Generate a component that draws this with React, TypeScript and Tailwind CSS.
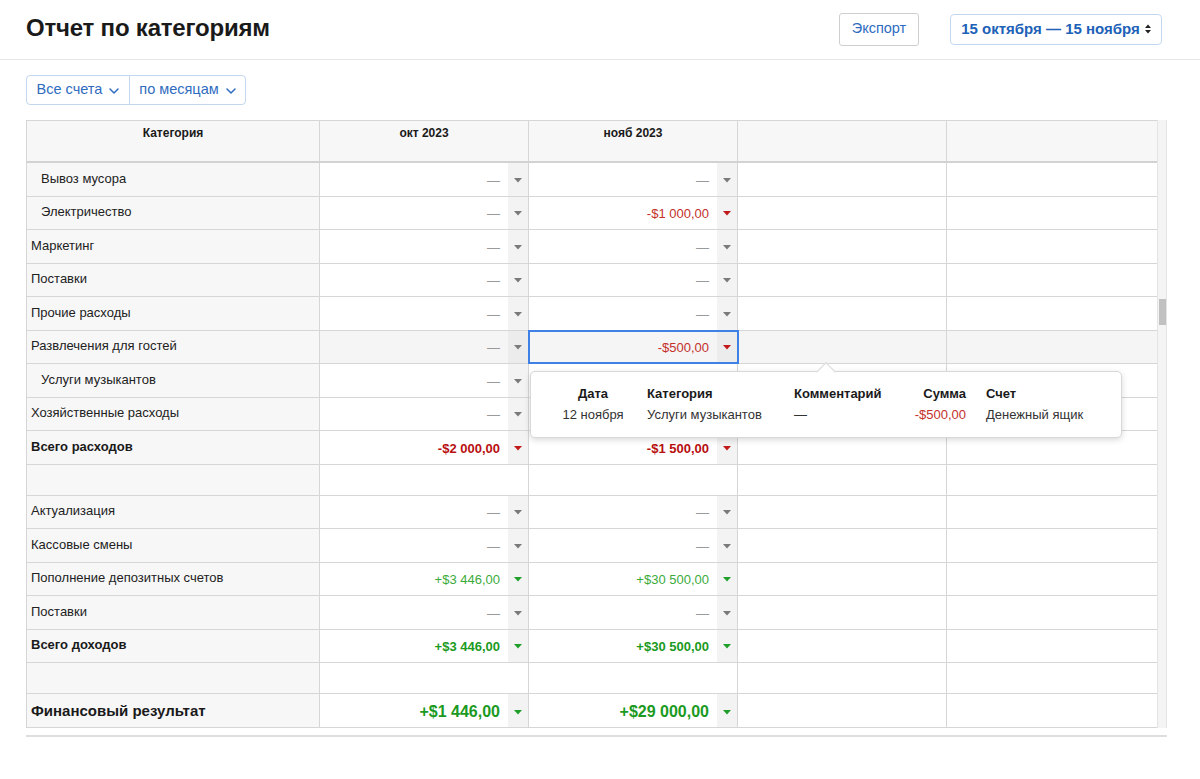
import React from "react";

type Kind = "dash" | "red" | "green";
type Val = { t: string; k: Kind };
type Row = {
  label?: string;
  indent?: boolean;
  bold?: boolean;
  big?: boolean;
  blank?: boolean;
  hover?: boolean;
  selected?: boolean;
  v?: [Val | undefined, Val | undefined];
};

const D: Val = { t: "—", k: "dash" };
const red = (t: string): Val => ({ t, k: "red" });
const green = (t: string): Val => ({ t, k: "green" });

const rows: Row[] = [
  { label: "Вывоз мусора", indent: true, v: [D, D] },
  { label: "Электричество", indent: true, v: [D, red("-$1 000,00")] },
  { label: "Маркетинг", v: [D, D] },
  { label: "Поставки", v: [D, D] },
  { label: "Прочие расходы", v: [D, D] },
  { label: "Развлечения для гостей", v: [D, red("-$500,00")], hover: true, selected: true },
  { label: "Услуги музыкантов", indent: true, v: [D, undefined] },
  { label: "Хозяйственные расходы", v: [D, undefined] },
  { label: "Всего расходов", bold: true, v: [red("-$2 000,00"), red("-$1 500,00")] },
  { blank: true },
  { label: "Актуализация", v: [D, D] },
  { label: "Кассовые смены", v: [D, D] },
  { label: "Пополнение депозитных счетов", v: [green("+$3 446,00"), green("+$30 500,00")] },
  { label: "Поставки", v: [D, D] },
  { label: "Всего доходов", bold: true, v: [green("+$3 446,00"), green("+$30 500,00")] },
  { blank: true },
  { label: "Финансовый результат", big: true, v: [green("+$1 446,00"), green("+$29 000,00")] },
];

function Tri({ k }: { k: Kind }) {
  const fill = k === "red" ? "#c21a1a" : k === "green" ? "#1f9e2a" : "#7a7a7a";
  return (
    <svg width="8" height="5" viewBox="0 0 8 5">
      <path d="M0 0 L8 0 L4 4.5 Z" fill={fill} />
    </svg>
  );
}

function ValueCell({ v, row, selected }: { v?: Val; row: Row; selected?: boolean }) {
  const bg = row.hover ? "bg-[#f5f5f5]" : "bg-white";
  if (!v) {
    return <div className={`w-[209px] h-full border-r border-[#d6d6d6] ${bg}`} />;
  }
  let color = "text-[#9a9a9a]";
  if (v.k === "red") color = row.bold ? "text-[#b80f0f] font-bold" : "text-[#c4302b]";
  if (v.k === "green") color = row.bold || row.big ? "text-[#1b9a22] font-bold" : "text-[#3cab3c]";
  const size = row.big ? "text-[16px]" : "text-[13px]";
  return (
    <div
      className={`relative w-[209px] h-full border-r border-[#d6d6d6] flex ${bg} ${
        selected ? "outline-2 outline-[#3f80e6] -outline-offset-1 z-10" : ""
      }`}
    >
      <div className={`flex-1 flex items-center justify-end pr-[8px] ${row.big ? "pt-[4px]" : "pt-[2px]"} ${size} ${color}`}>
        {v.t}
      </div>
      <div className={`w-[20px] h-full flex items-center justify-center ${row.hover ? "bg-[#ececec]" : "bg-[#f3f3f3]"} ${row.big ? "pt-[4px]" : "pt-[2px]"}`}>
        <Tri k={v.k} />
      </div>
    </div>
  );
}

function TableRow({ row }: { row: Row }) {
  const h = row.blank ? "h-[31px]" : "h-[33.5px]";
  const emptyBg = row.hover ? "bg-[#f5f5f5]" : "bg-white";
  return (
    <div className={`flex ${h} border-b border-[#d6d6d6]`}>
      <div
        className={`w-[293px] h-full border-r border-[#d6d6d6] bg-[#f7f7f7] flex items-center ${
          row.indent ? "pl-[14px]" : "pl-[4px]"
        } ${row.big ? "text-[15px] font-bold text-[#1a1a1a] pt-[1px]" : row.bold ? "text-[13px] font-bold text-[#1a1a1a] pb-[2px]" : "text-[13px] text-[#222] pb-[2px]"}`}
      >
        {row.label}
      </div>
      <ValueCell v={row.v?.[0]} row={row} />
      <ValueCell v={row.v?.[1]} row={row} selected={row.selected} />
      <div className={`w-[209px] h-full border-r border-[#d6d6d6] ${emptyBg}`} />
      <div className={`flex-1 h-full ${emptyBg}`} />
    </div>
  );
}

function Chevron() {
  return (
    <svg width="10" height="6" viewBox="0 0 10 6" className="ml-[7px] mt-[1px]">
      <path d="M1 1 L5 5 L9 1" fill="none" stroke="#2f6cc0" strokeWidth="1.5" strokeLinecap="round" strokeLinejoin="round" />
    </svg>
  );
}

export default function App() {
  return (
    <div
      className="w-[1200px] h-[779px] bg-white overflow-hidden text-[#222]"
      style={{ fontFamily: '"Liberation Sans", Arial, "Noto Sans", sans-serif' }}
    >
      {/* top bar */}
      <div className="h-[60px] border-b border-[#e6e6e6] flex items-center pl-[26px] pr-[38px]">
        <h1 className="text-[24px] font-bold text-[#1a1a1a] tracking-[-0.2px] pb-[3px]">Отчет по категориям</h1>
        <div className="ml-auto flex items-center">
          <button className="w-[80px] h-[33px] border border-[#cfcfcf] rounded-[3px] text-[14.5px] text-[#2f6cc0] bg-white mt-[-1px]">
            Экспорт
          </button>
          <button className="ml-[31px] w-[212px] h-[31px] border border-[#c3d8ef] rounded-[4px] bg-white flex items-center justify-center text-[15px] font-bold text-[#2061b8] mt-[-1px]">
            <span>15 октября — 15 ноября</span>
            <svg width="6" height="10" viewBox="0 0 6 10" className="ml-[5px]">
              <path d="M0 4 L3 0.5 L6 4 Z" fill="#222" />
              <path d="M0 6 L3 9.5 L6 6 Z" fill="#222" />
            </svg>
          </button>
        </div>
      </div>

      {/* filters */}
      <div className="pl-[26px] pt-[15px]">
        <div className="inline-flex h-[30px] border border-[#c3d8ef] rounded-[4px] text-[14.5px] text-[#2f6cc0]">
          <div className="w-[103px] flex items-center justify-center border-r border-[#c3d8ef]">
            Все счета
            <Chevron />
          </div>
          <div className="w-[115px] flex items-center justify-center">
            по месяцам
            <Chevron />
          </div>
        </div>
      </div>

      {/* table */}
      <div className="relative ml-[26px] mt-[15px] w-[1141px]">
        <div className="flex">
          <div className="w-[1131px] border-l border-t border-[#d6d6d6]">
            {/* header */}
            <div className="flex h-[42px] border-b-2 border-[#d2d2d2] bg-[#f7f7f7] text-[12px] font-bold text-[#1a1a1a]">
              <div className="w-[293px] h-full border-r border-[#d6d6d6] text-center pt-[3px]">Категория</div>
              <div className="w-[209px] h-full border-r border-[#d6d6d6] text-center pt-[3px]">окт 2023</div>
              <div className="w-[209px] h-full border-r border-[#d6d6d6] text-center pt-[3px]">нояб 2023</div>
              <div className="w-[209px] h-full border-r border-[#d6d6d6]" />
              <div className="flex-1 h-full" />
            </div>
            {rows.map((r, i) => (
              <TableRow key={i} row={r} />
            ))}
          </div>
          {/* vertical scrollbar */}
          <div className="relative w-[10px] bg-[#f4f4f4] border-l border-r border-[#e4e4e4]">
            <div className="absolute left-[1px] right-[0px] top-[179px] h-[26px] bg-[#c1c1c1]" />
          </div>
        </div>
        <div className="h-[9px] border-b-2 border-[#dedede]" />

        {/* tooltip */}
        <div className="absolute left-[504px] top-[251px] w-[592px] h-[67px] bg-white border border-[#d8d8d8] rounded-[5px] shadow-[0_2px_6px_rgba(0,0,0,0.15)] z-20">
          <div className="absolute left-[288px] top-[-8px] w-[14px] h-[14px] bg-white border-l border-t border-[#d8d8d8] rotate-45 origin-center translate-y-[1px]" />
          <div className="relative pl-[16px] pt-[11px] text-[13px] leading-[21px] grid grid-cols-[92px_155px_112px_60px_1fr]">
            <div className="text-center font-bold text-[#1a1a1a]">Дата</div>
            <div className="pl-[8px] font-bold text-[#1a1a1a]">Категория</div>
            <div className="font-bold text-[#1a1a1a]">Комментарий</div>
            <div className="text-right font-bold text-[#1a1a1a]">Сумма</div>
            <div className="pl-[20px] font-bold text-[#1a1a1a]">Счет</div>
            <div className="text-center text-[#333]">12 ноября</div>
            <div className="pl-[8px] text-[#333]">Услуги музыкантов</div>
            <div className="text-[#333]">—</div>
            <div className="text-right text-[#c4302b] whitespace-nowrap">-$500,00</div>
            <div className="pl-[20px] text-[#333]">Денежный ящик</div>
          </div>
        </div>
      </div>
    </div>
  );
}
